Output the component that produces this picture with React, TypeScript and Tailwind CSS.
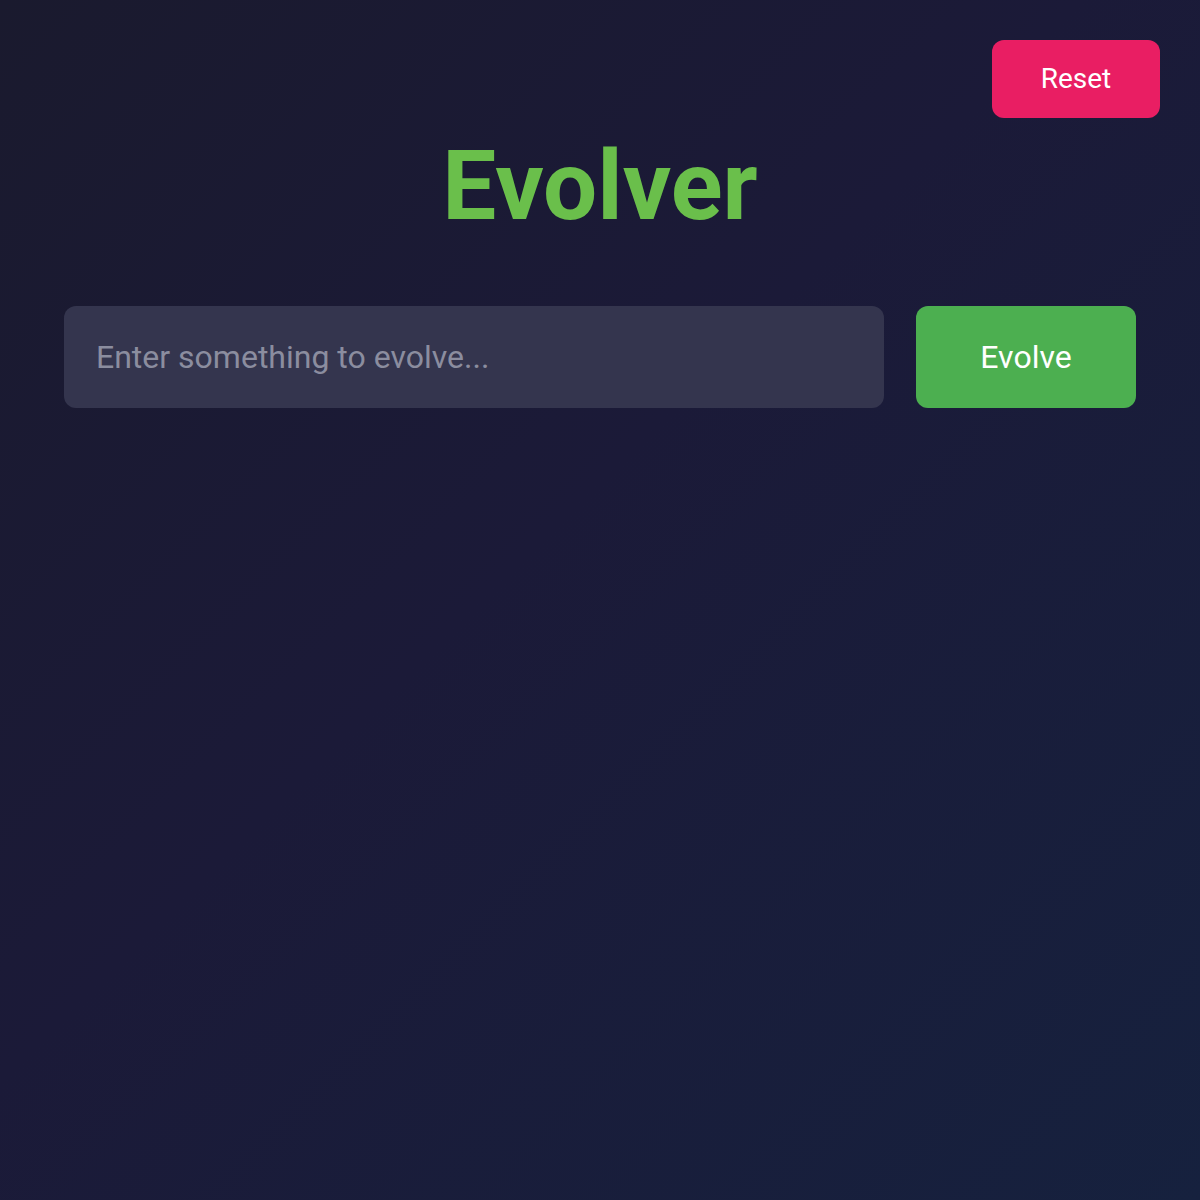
import React, { useState } from "react";

export default function App() {
  const [value, setValue] = useState("");

  return (
    <div className="relative min-h-[1200px] w-full bg-[linear-gradient(135deg,#1a1a2e_0%,#1b1a38_45%,#16213e_100%)] font-['Roboto','Liberation_Sans',sans-serif] text-white">
      {/* Reset button, pinned top-right */}
      <button
        className="absolute right-10 top-10 flex h-[78px] w-[168px] items-center justify-center rounded-[12px] bg-[#e91e63] text-[28px] text-white"
        onClick={() => setValue("")}
      >
        Reset
      </button>

      <main className="flex flex-col px-16 pt-[130px]">
        <h1 className="mb-[64px] text-center text-[96px] font-bold leading-[112px] text-[#6abf4b]">
          Evolver
        </h1>

        <div className="flex gap-8">
          <input
            value={value}
            onChange={(e) => setValue(e.target.value)}
            placeholder="Enter something to evolve..."
            className="h-[102px] flex-1 rounded-[12px] bg-[#34354e] px-8 text-[32px] text-white outline-none placeholder:text-[#8b8d9f]"
          />
          <button className="flex h-[102px] w-[220px] items-center justify-center rounded-[12px] bg-[#4caf50] text-[32px] text-white">
            Evolve
          </button>
        </div>
      </main>
    </div>
  );
}
